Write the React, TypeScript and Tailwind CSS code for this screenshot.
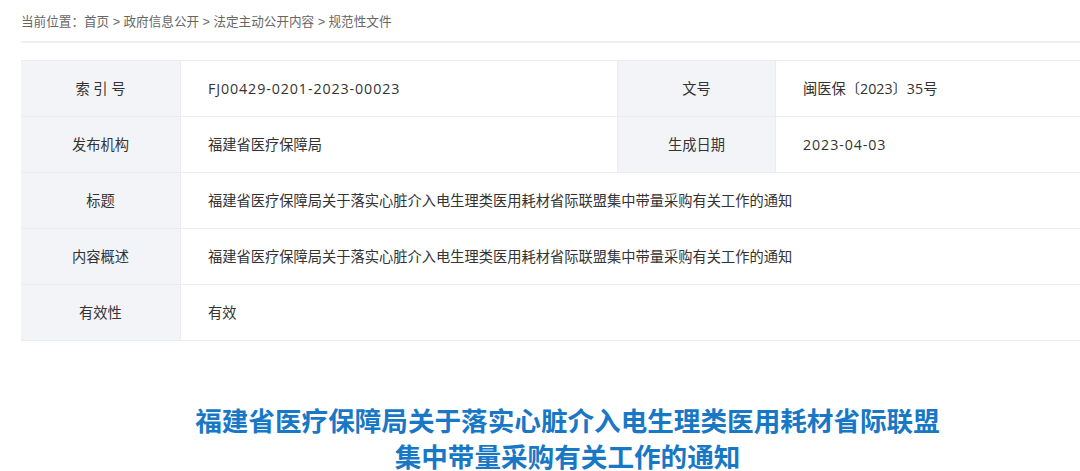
const rows = [
  { label: "索 引 号", value: "FJ00429-0201-2023-00023", label2: "文号", value2: "闽医保〔2023〕35号" },
  { label: "发布机构", value: "福建省医疗保障局", label2: "生成日期", value2: "2023-04-03" },
  { label: "标题", value: "福建省医疗保障局关于落实心脏介入电生理类医用耗材省际联盟集中带量采购有关工作的通知" },
  { label: "内容概述", value: "福建省医疗保障局关于落实心脏介入电生理类医用耗材省际联盟集中带量采购有关工作的通知" },
  { label: "有效性", value: "有效" },
];

// numeric codes render a bit wider in the original font
const wide = (v: string) => (/^[A-Z0-9-]+$/.test(v) ? "tracking-[0.9px]" : "");

export default function App() {
  return (
    <div
      className="w-[1080px] h-[471px] overflow-hidden bg-white"
      style={{ fontFamily: '"Liberation Sans", "Noto Sans CJK SC", sans-serif' }}
    >
      <div className="ml-[21px] w-[1093px]">
        {/* Breadcrumb */}
        <div className="pt-[13px] pb-[10px] border-b-2 border-[#f0f0f0] text-[12.6px] leading-[18px] text-[#666] w-[1059px]">
          当前位置：首页 &gt; 政府信息公开 &gt; 法定主动公开内容 &gt; 规范性文件
        </div>

        {/* Info table */}
        <div
          className="mt-[17px] border-t border-[#ececef] text-[14.25px] text-[#333]"
          style={{ fontFamily: '"Open Sans", "Noto Sans CJK SC", sans-serif' }}
        >
          {rows.map((r) => (
            <div key={r.label} className="flex h-[56px] border-b border-[#ececef]">
              <div className="w-[160px] shrink-0 bg-[#f3f4f8] border-r border-[#ececef] flex items-center justify-center">
                {r.label}
              </div>
              {r.label2 ? (
                <>
                  <div className={`w-[436px] shrink-0 flex items-center pl-[27px] ${wide(r.value)}`}>{r.value}</div>
                  <div className="w-[159px] shrink-0 bg-[#f3f4f8] border-l border-r border-[#ececef] flex items-center justify-center">
                    {r.label2}
                  </div>
                  <div className={`flex-1 flex items-center pl-[27px] ${wide(r.value2)}`}>{r.value2}</div>
                </>
              ) : (
                <div className="flex-1 flex items-center pl-[27px]">{r.value}</div>
              )}
            </div>
          ))}
        </div>

        {/* Document title */}
        <h1 className="mt-[63px] text-center text-[26.6px] leading-[36px] font-bold text-[#1878c6]">
          福建省医疗保障局关于落实心脏介入电生理类医用耗材省际联盟
          <br />
          集中带量采购有关工作的通知
        </h1>
      </div>
    </div>
  );
}
